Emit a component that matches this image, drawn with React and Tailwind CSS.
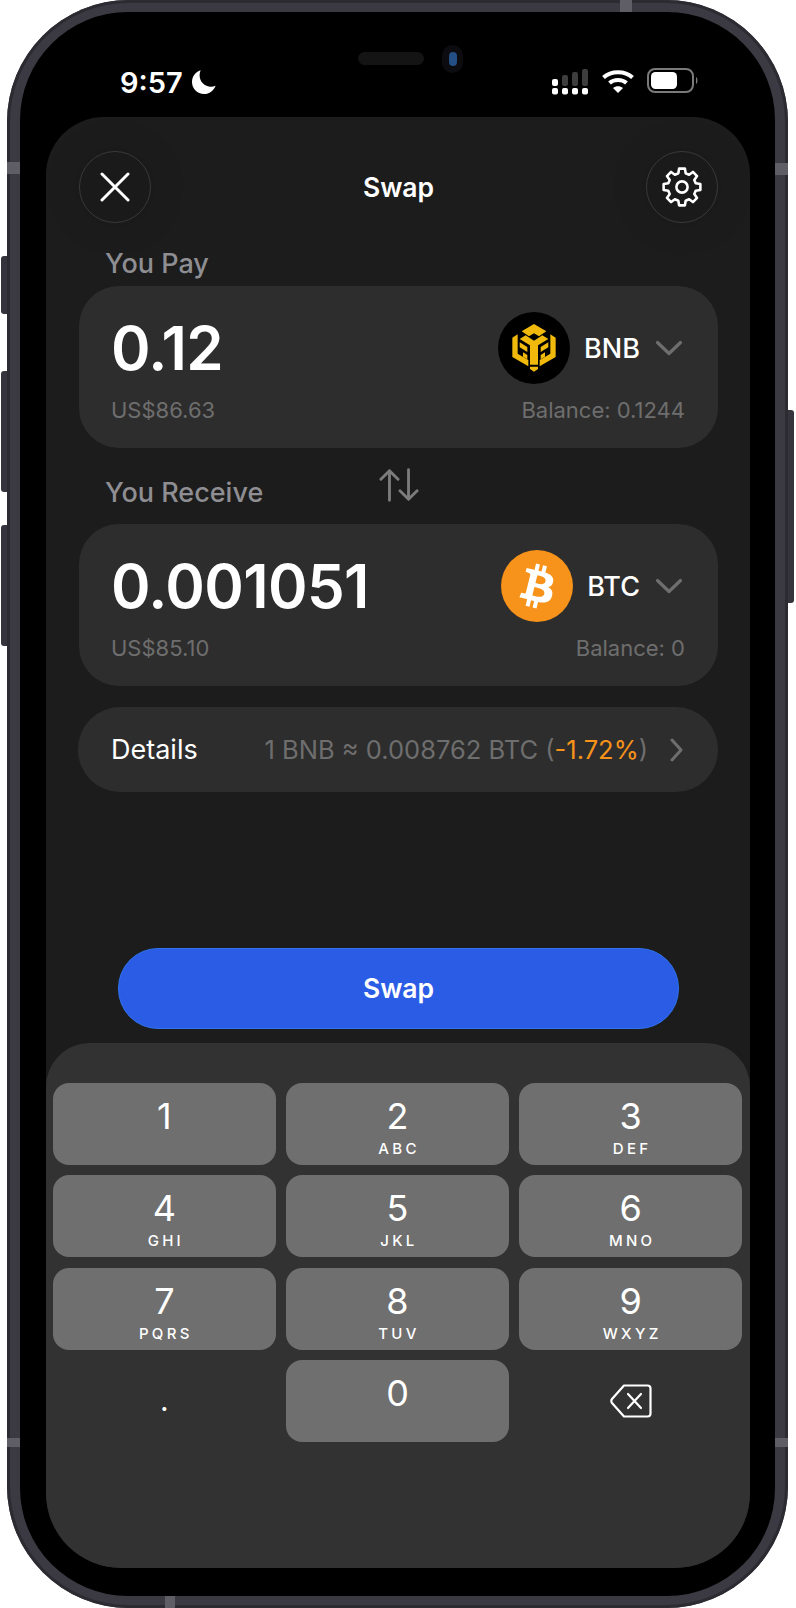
import React from "react";

const keys = [
  ["1", ""], ["2", "ABC"], ["3", "DEF"],
  ["4", "GHI"], ["5", "JKL"], ["6", "MNO"],
  ["7", "PQRS"], ["8", "TUV"], ["9", "WXYZ"],
];

const gearPath = (() => {
  const pts = [];
  const c = 21;
  const p = (r, deg) => {
    const t = (deg * Math.PI) / 180;
    return `${(c + r * Math.cos(t)).toFixed(2)} ${(c + r * Math.sin(t)).toFixed(2)}`;
  };
  for (let i = 0; i < 8; i++) {
    const a = i * 45 - 90;
    pts.push(p(14.2, a - 15), p(18.6, a - 9), p(18.6, a + 9), p(14.2, a + 15));
  }
  return "M" + pts.join(" L") + "Z";
})();

function Gear() {
  return (
    <svg width="42" height="42" viewBox="0 0 42 42" fill="none">
      <path d={gearPath} stroke="#fff" strokeWidth="2.6" strokeLinejoin="round" />
      <circle cx="21" cy="21" r="5.6" stroke="#fff" strokeWidth="2.6" />
    </svg>
  );
}

function Chevron() {
  return (
    <svg width="28" height="16" viewBox="0 0 28 16" fill="none" className="shrink-0">
      <path d="M2.5 2.5 L14 13.5 L25.5 2.5" stroke="#6e6e6e" strokeWidth="3.2" strokeLinecap="round" strokeLinejoin="round" />
    </svg>
  );
}

function BnbLogo() {
  return (
    <svg width="72" height="72" viewBox="9 9 216 216" className="shrink-0">
      <circle cx="117" cy="117" r="108" fill="#000" />
      <g fill="#F0B90B" transform="translate(2 2)">
        <path d="M115 43 L152 65 L130 80 L115 71 L100 80 L78 65Z" />
        <path d="M72 88 L90 77 L115 93 L140 77 L158 88 L127 107 L127 165 L103 165 L103 107Z" />
        <path d="M50 84 L66 74 L66 132 L98 151 L98 170 L50 142Z" />
        <path d="M180 84 L164 74 L164 132 L132 151 L132 170 L180 142Z" />
        <path d="M72 98 L95 112 L95 127 L72 113Z" />
        <path d="M158 98 L135 112 L135 127 L158 113Z" />
        <path d="M82 128 L95 136 L95 149 L82 141Z" />
        <path d="M148 128 L135 136 L135 149 L148 141Z" />
        <path d="M103 171 L115 171 L127 171 L127 178 L115 186 L103 178Z" />
      </g>
    </svg>
  );
}

function BtcLogo() {
  return (
    <svg width="72" height="72" viewBox="0 0 32 32" className="shrink-0">
      <circle cx="16" cy="16" r="16" fill="#F7931A" />
      <path
        fill="#fff"
        d="M23.189 14.02c.314-2.096-1.283-3.223-3.465-3.975l.708-2.84-1.728-.43-.69 2.765c-.454-.114-.92-.22-1.385-.326l.695-2.783L15.596 6l-.708 2.839c-.376-.086-.746-.17-1.104-.26l.002-.009-2.384-.595-.46 1.846s1.283.294 1.256.312c.7.175.826.638.805 1.006l-.806 3.235c.048.012.11.03.18.057l-.183-.045-1.13 4.532c-.086.212-.303.531-.793.41.018.025-1.256-.313-1.256-.313l-.858 1.978 2.25.561c.418.105.828.215 1.231.318l-.715 2.872 1.727.43.708-2.84c.472.127.93.245 1.378.357l-.706 2.828 1.728.43.715-2.866c2.948.558 5.164.333 6.097-2.333.752-2.146-.037-3.385-1.588-4.192 1.13-.26 1.98-1.003 2.207-2.538zm-3.95 5.538c-.533 2.147-4.148.986-5.32.695l.95-3.805c1.172.293 4.929.872 4.37 3.11zm.535-5.569c-.487 1.953-3.495.96-4.47.717l.86-3.45c.975.243 4.118.696 3.61 2.733z"
      />
    </svg>
  );
}

function Signal() {
  return (
    <svg width="36" height="26" viewBox="0 0 36 26">
      <rect x="0" y="10" width="6" height="7" rx="2" fill="#fff" />
      <rect x="10" y="6" width="6" height="11" rx="2" fill="#3d3d3d" />
      <rect x="20" y="3" width="6" height="14" rx="2" fill="#3d3d3d" />
      <rect x="30" y="0" width="6" height="17" rx="2" fill="#3d3d3d" />
      {[0, 10, 20, 30].map((x) => (
        <rect key={x} x={x} y="19" width="6" height="6.5" rx="2" fill="#fff" />
      ))}
    </svg>
  );
}

function Wifi() {
  return (
    <svg width="34" height="24" viewBox="0 0 34 24" fill="none">
      <path d="M2.5 8.5 C10 1.5 24 1.5 31.5 8.5" stroke="#fff" strokeWidth="4" strokeLinecap="butt" />
      <path d="M8.5 14 C13 10 21 10 25.5 14" stroke="#fff" strokeWidth="4" strokeLinecap="butt" />
      <path d="M12 19 L17 24 L22 19 C19 16.5 15 16.5 12 19Z" fill="#fff" />
    </svg>
  );
}

function Battery() {
  return (
    <svg width="52" height="25" viewBox="0 0 52 25" fill="none">
      <rect x="1" y="1" width="45" height="23" rx="7" stroke="#7a7a7a" strokeWidth="2" />
      <rect x="4" y="4" width="26" height="17" rx="4.5" fill="#fff" />
      <path d="M49 9 C51 10 51 15 49 16Z" fill="#7a7a7a" />
    </svg>
  );
}

function Backspace() {
  return (
    <svg width="42" height="34" viewBox="0 0 42 34" fill="none">
      <path
        d="M14 1.5 H37.5 A3 3 0 0 1 40.5 4.5 V29.5 A3 3 0 0 1 37.5 32.5 H14 L2 19 A3.5 3.5 0 0 1 2 15 Z"
        stroke="#fff"
        strokeWidth="2.2"
        strokeLinejoin="round"
      />
      <path d="M18 10 L31 24 M31 10 L18 24" stroke="#fff" strokeWidth="2.2" strokeLinecap="round" />
    </svg>
  );
}

function TokenCard({ logo, amount, usd, symbol, balance }) {
  return (
    <div className="flex h-[162px] flex-col rounded-[40px] bg-[#2d2d2d] pl-[32px] pr-[33px] pt-[26px]">
      <div className="flex h-[72px] items-center justify-between">
        <span className="text-[60px] font-semibold leading-none tracking-[-0.01em] text-white">{amount}</span>
        <div className="flex items-center">
          {logo}
          <span className="ml-[14px] pt-[2px] text-[27px] font-medium text-white">{symbol}</span>
          <span className="ml-[15px] mr-[2px]"><Chevron /></span>
        </div>
      </div>
      <div className="mt-[12px] flex items-center justify-between text-[22px] leading-[28px] text-[#6e6e6e]">
        <span>{usd}</span>
        <span>{balance}</span>
      </div>
    </div>
  );
}

export default function App() {
  return (
    <div className="relative h-[1608px] w-[796px] overflow-hidden bg-white font-['Inter',sans-serif]">
      {/* side buttons */}
      <div className="absolute left-[1px] top-[256px] h-[58px] w-[7px] rounded-l-[3px] bg-[#35343c]" />
      <div className="absolute left-[1px] top-[371px] h-[121px] w-[7px] rounded-l-[3px] bg-[#35343c]" />
      <div className="absolute left-[1px] top-[525px] h-[121px] w-[7px] rounded-l-[3px] bg-[#35343c]" />
      <div className="absolute left-[787px] top-[410px] h-[193px] w-[7px] rounded-r-[3px] bg-[#35343c]" />

      {/* device */}
      <div className="relative ml-[7px] h-[1608px] w-[781px] rounded-[122px] bg-[#3b3a43] pl-[13px] pt-[12px] shadow-[inset_0_0_0_3px_#2c2b32]">
        {/* antenna bands */}
        <div className="absolute left-0 top-[162px] h-[12px] w-[13px] bg-[#5f5e67]" />
        <div className="absolute right-0 top-[163px] h-[12px] w-[13px] bg-[#5f5e67]" />
        <div className="absolute left-0 top-[1438px] h-[9px] w-[13px] bg-[#5f5e67]" />
        <div className="absolute right-0 top-[1438px] h-[9px] w-[13px] bg-[#5f5e67]" />
        <div className="absolute left-[613px] top-0 h-[12px] w-[12px] bg-[#5f5e67]" />
        <div className="absolute bottom-0 left-[158px] h-[12px] w-[10px] bg-[#5f5e67]" />

        <div className="h-[1584px] w-[755px] rounded-[108px] bg-black pl-[26px]">
          {/* status bar */}
          <div className="relative h-[105px] w-[704px]">
            <div className="absolute left-[312px] top-[40px] h-[13px] w-[66px] rounded-full bg-[#141414]" />
            <div className="absolute left-[396px] top-[33px] flex h-[28px] w-[21px] items-center justify-center rounded-full bg-[#0c0c10]">
              <div className="h-[14px] w-[8px] rounded-full bg-[#234f85]" />
            </div>
            <div className="flex h-full items-start pt-[56px]">
              <span className="ml-[74px] text-[29px] font-semibold leading-[30px] text-white">9:57</span>
              <svg width="24" height="24" viewBox="0 0 24 24" className="ml-[9px] mt-[2px]">
                <path d="M8.6 0.2 C3.5 1.8 0 6.5 0 12 C0 18.8 5.4 24 12 24 C17.4 24 21.8 20.6 23.6 15.7 C22.2 16.4 20.6 16.7 19 16.7 C12.5 16.7 7.6 11.7 7.6 5.3 C7.6 3.5 8 1.8 8.6 0.2Z" fill="#fff" />
              </svg>
              <div className="ml-auto flex items-start pr-[51px]">
                <div className="mt-[1px]"><Signal /></div>
                <div className="ml-[13px] mt-[1px]"><Wifi /></div>
                <div className="ml-[12px]"><Battery /></div>
              </div>
            </div>
          </div>

          {/* screen */}
          <div className="flex h-[1451px] w-[704px] flex-col overflow-hidden rounded-t-[58px] rounded-b-[75px] bg-[#1c1c1c]">
            <div className="px-[32px] pt-[34px]">
              <div className="flex items-center justify-between pl-[1px]">
                <button className="flex h-[72px] w-[72px] items-center justify-center rounded-full border border-[#3a3a3a] bg-[#1a1a1a] shadow-[0_0_40px_rgba(0,0,0,0.12)]">
                  <svg width="30" height="30" viewBox="0 0 30 30" fill="none">
                    <path d="M2 2 L28 28 M28 2 L2 28" stroke="#fff" strokeWidth="3" strokeLinecap="round" />
                  </svg>
                </button>
                <span className="pt-[1px] text-[26.5px] font-semibold text-white">Swap</span>
                <button className="flex h-[72px] w-[72px] items-center justify-center rounded-full border border-[#3a3a3a] bg-[#1a1a1a] shadow-[0_0_40px_rgba(0,0,0,0.12)]">
                  <Gear />
                </button>
              </div>

              <div className="mt-[20px] h-[43px] pl-[27px] pt-[1px] text-[27px] font-medium leading-[40px] text-[#8e8e93]">You Pay</div>
              <div className="ml-[1px]">
                <TokenCard logo={<BnbLogo />} amount="0.12" usd="US$86.63" symbol="BNB" balance="Balance: 0.1244" />
              </div>

              <div className="grid h-[76px] grid-cols-[1fr_auto_1fr] items-center pl-[27px]">
                <span className="pt-[14px] text-[27px] font-medium text-[#8e8e93]">You Receive</span>
                <svg width="40" height="36" viewBox="0 0 42 36" fill="none" className="mb-[2px] mr-[26px]">
                  <path d="M11 34 V3 M2 12 L11 3 L20 12 M31 2 V33 M22 24 L31 33 L40 24" stroke="#7c7c7c" strokeWidth="3" strokeLinecap="round" strokeLinejoin="round" />
                </svg>
                <span />
              </div>
              <div className="ml-[1px]">
                <TokenCard logo={<BtcLogo />} amount="0.001051" usd="US$85.10" symbol="BTC" balance="Balance: 0" />
              </div>

              <div className="mt-[21px] flex h-[85px] items-center rounded-[42px] bg-[#2d2d2d] pl-[33px] pr-[35px]">
                <span className="pt-[2px] text-[27px] text-white">Details</span>
                <span className="ml-auto pt-[1px] text-[25.5px] text-[#6e6e6e]">
                  1 BNB ≈ 0.008762 BTC (<span className="text-[#f7931a]">-1.72%</span>)
                </span>
                <svg width="13" height="24" viewBox="0 0 13 24" fill="none" className="ml-[22px] shrink-0">
                  <path d="M2 2 L11 12 L2 22" stroke="#6e6e6e" strokeWidth="3" strokeLinecap="round" strokeLinejoin="round" />
                </svg>
              </div>
            </div>

            <button className="ml-[72px] mt-[156px] flex h-[81px] w-[561px] shrink-0 items-center justify-center rounded-[40px] border border-[#2f73ee] bg-[#2b5ce6] pt-[1px] text-[26.5px] font-semibold text-white">
              Swap
            </button>

            <div className="mt-[14px] flex-1 rounded-t-[44px] bg-[#323232] pl-[7px] pr-[8px] pt-[40px]">
              <div className="grid grid-cols-3 gap-x-[10.5px] gap-y-[10.3px]">
                {keys.map(([d, l]) => (
                  <div key={d} className="flex h-[82px] flex-col items-center rounded-[16px] bg-[#6f6f6f] text-white">
                    <span className="mt-[12px] text-[36px] leading-[42px]">{d}</span>
                    <span className="mt-[3px] h-[18px] pl-[3px] text-[15px] font-medium leading-[18px] tracking-[0.22em]">{l}</span>
                  </div>
                ))}
                <div className="flex h-[82px] items-center justify-center text-[30px] text-white">.</div>
                <div className="flex h-[82px] flex-col items-center rounded-[16px] bg-[#6f6f6f] text-white">
                  <span className="mt-[12px] text-[36px] leading-[42px]">0</span>
                </div>
                <div className="flex h-[82px] items-center justify-center">
                  <Backspace />
                </div>
              </div>
            </div>
          </div>
        </div>
      </div>
    </div>
  );
}
